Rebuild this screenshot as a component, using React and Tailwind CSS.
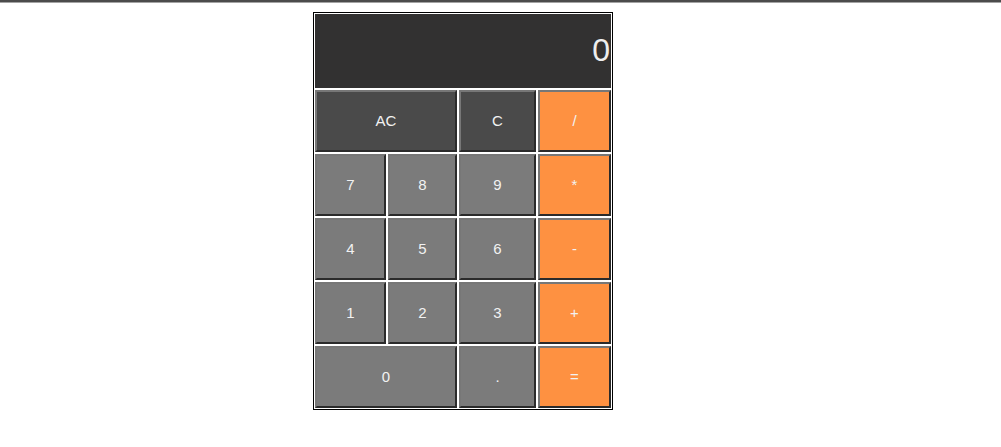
const rows = [
    [{ label: "AC", span: 2, kind: "dark" }, { label: "C", kind: "dark" }, { label: "/", kind: "op" }],
    [{ label: "7" }, { label: "8" }, { label: "9" }, { label: "*", kind: "op" }],
    [{ label: "4" }, { label: "5" }, { label: "6" }, { label: "-", kind: "op" }],
    [{ label: "1" }, { label: "2" }, { label: "3" }, { label: "+", kind: "op" }],
    [{ label: "0", span: 2 }, { label: "." }, { label: "=", kind: "op" }],
];

const kindBg = {
    dark: "bg-[#4a4a4a]",
    op: "bg-[#fe9141]",
    num: "bg-[#7b7b7b]",
};

function Key({ label, span, kind = "num" }) {
    return (
        <button
            type="button"
            className={`${span === 2 ? "col-span-2" : ""} ${kindBg[kind]} h-[62px] border-2 border-t-[#777777] border-l-[#777777] border-b-[#2b2b2b] border-r-[#2b2b2b] text-[15px] text-[#f2f2f2] flex items-center justify-center`}
        >
            {label}
        </button>
    );
}

export default function App() {
    return (
        <div className="min-h-[447px] bg-white font-['Liberation_Sans',Arial,sans-serif]">
            <div className="h-[3px] bg-[#4b4b4b] border-b border-[#a3a3a3]" />
            <div className="ml-[313px] mt-[9px] w-[300px] border border-black p-px">
                <div className="h-[74px] bg-[#323131] overflow-hidden flex items-center justify-end">
                    <span className="text-[32px] leading-none text-[#eeeeee] pr-px -mt-[2px]">0</span>
                </div>
                <div className="mt-[2px] grid grid-cols-[71px_69px_77px_73px] gap-[2px]">
                    {rows.flat().map((k, i) => (
                        <Key key={i} {...k} />
                    ))}
                </div>
            </div>
        </div>
    );
}
